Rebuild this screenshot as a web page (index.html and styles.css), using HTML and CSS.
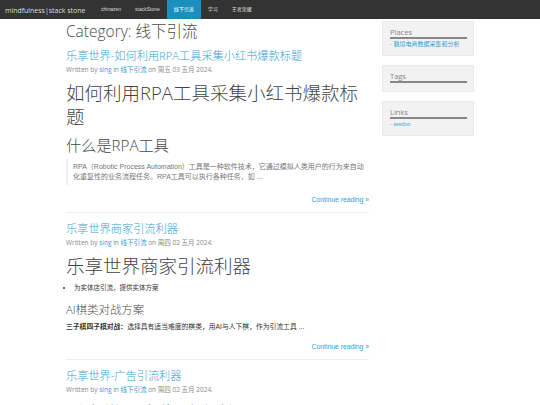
FILE: index.html
```html
<!DOCTYPE html>
<html lang="zh">
<head>
    <meta charset="UTF-8">
    <meta name="viewport" content="width=device-width, initial-scale=1.0">
    <title>线下引流 - mindfulness|stack stone</title>
    <link rel="stylesheet" href="styles.css">
</head>
<body>
    <div class="navbar">
        <a class="brand" href="#"><span>mindfulness|stack stone</span></a>
        <ul class="nav">
            <li><a href="#">chinazen</a></li>
            <li><a href="#">stackStone</a></li>
            <li class="active"><a href="#">线下引流</a></li>
            <li><a href="#">学习</a></li>
            <li><a href="#">王者荣耀</a></li>
        </ul>
    </div>
    <div class="container">
        <div class="content">
            <h1 class="page-title">Category: 线下引流</h1>

            <div class="article">
                <h2 class="entry-title"><a href="#">乐享世界-如何利用RPA工具采集小红书爆款标题</a></h2>
                <div class="meta">Written by <a href="#">sing</a> in <a href="#">线下引流</a> on 周五 03 五月 2024.</div>
                <h1 class="big">如何利用RPA工具采集小红书爆款标题</h1>
                <h2 class="sub">什么是RPA工具</h2>
                <blockquote>RPA（Robotic Process Automation）工具是一种软件技术，它通过模拟人类用户的行为来自动化重复性的业务流程任务。RPA工具可以执行各种任务，如 ...</blockquote>
                <div class="more"><a href="#">Continue reading »</a></div>
            </div>

            <div class="article">
                <h2 class="entry-title"><a href="#">乐享世界商家引流利器</a></h2>
                <div class="meta">Written by <a href="#">sing</a> in <a href="#">线下引流</a> on 周四 02 五月 2024.</div>
                <h1 class="big">乐享世界商家引流利器</h1>
                <ul class="points">
                    <li>为实体店引流，提供实体方案</li>
                </ul>
                <h3 class="small">AI棋类对战方案</h3>
                <p class="summary"><strong>三子棋四子棋对战：</strong>选择具有适当难度的棋类，用AI与人下棋，作为引流工具 ...</p>
                <div class="more"><a href="#">Continue reading »</a></div>
            </div>

            <div class="article">
                <h2 class="entry-title"><a href="#">乐享世界-广告引流利器</a></h2>
                <div class="meta">Written by <a href="#">sing</a> in <a href="#">线下引流</a> on 周四 02 五月 2024.</div>
                <h1 class="big">乐享世界广告引流利器</h1>
            </div>
        </div>

        <div class="sidebar">
            <div class="well">
                <div class="well-title">Places</div>
                <a href="#">- 跳境电商数据采集和分析</a>
            </div>
            <div class="well">
                <div class="well-title">Tags</div>
            </div>
            <div class="well">
                <div class="well-title">Links</div>
                <a href="#">- weibo</a>
            </div>
        </div>
    </div>
</body>
</html>
```

FILE: styles.css
```css
* {
    box-sizing: border-box;
}
body {
    margin: 0;
    font-family: "Open Sans", "Noto Sans CJK SC", sans-serif;
    color: #333;
    background: #fff;
    overflow: hidden;
    height: 405px;
}
a {
    color: #2a9fd6;
    text-decoration: none;
}
.navbar {
    height: 19px;
    background-color: #333;
    display: flex;
    align-items: stretch;
}
.brand {
    color: #ddd;
    font-size: 8px;
    line-height: 19px;
    padding: 0 0 0 5px;
    width: 94px;
    white-space: nowrap;
    overflow: hidden;
}
.brand span {
    display: inline-block;
    transform: scaleX(0.87);
    transform-origin: left center;
}
.nav {
    list-style: none;
    margin: 0;
    padding: 0;
    display: flex;
}
.nav li a {
    display: block;
    color: #ddd;
    font-size: 5px;
    line-height: 19px;
    padding: 0 7px;
    font-family: "Liberation Sans", "Noto Sans CJK SC", sans-serif;
}
.nav li.active a {
    background-color: #1b8fbf;
    color: #fff;
}
.container {
    display: flex;
    padding-left: 66px;
    gap: 13px;
}
.content {
    width: 303px;
}
.page-title {
    font-size: 15.5px;
    font-weight: 300;
    color: #4a4a4a;
    margin: 1px 0 0;
    line-height: 22px;
}
.article {
    border-bottom: 1px solid #eee;
    padding-bottom: 7px;
    margin-bottom: 7px;
}
.entry-title {
    font-size: 11.2px;
    font-weight: 300;
    margin: 5px 0 0;
    line-height: 18px;
}
.entry-title a {
    color: #3ba3cf;
}
.meta {
    font-size: 6.5px;
    color: #888;
    line-height: 10px;
    margin-top: 0;
}
.big {
    font-size: 18.5px;
    font-weight: 300;
    line-height: 24px;
    margin: 6px 0 0;
    color: #444;
}
.sub {
    font-size: 15.2px;
    font-weight: 300;
    line-height: 22px;
    margin: 5px 0 0;
    color: #444;
}
blockquote {
    margin: 3px 0 0;
    padding: 3px 0 3px 5px;
    border-left: 2px solid #eee;
    font-family: "Liberation Sans", "Noto Sans CJK SC", sans-serif;
    font-size: 7px;
    line-height: 10px;
    color: #777;
}
.more {
    text-align: right;
    margin-top: 10px;
    font-family: "Liberation Sans", sans-serif;
    font-size: 6.8px;
    line-height: 10px;
}
.more a {
    color: #2a9fd6;
}
.points {
    margin: 5px 0 0;
    padding-left: 8px;
    font-family: "Liberation Sans", "Noto Sans CJK SC", sans-serif;
    font-size: 6.5px;
    line-height: 10px;
    color: #333;
}
.small {
    font-size: 11.4px;
    font-weight: 300;
    line-height: 16px;
    margin: 9px 0 0;
    color: #4a4a4a;
}
.summary {
    margin: 4px 0 0;
    font-family: "Liberation Sans", "Noto Sans CJK SC", sans-serif;
    font-size: 6.8px;
    line-height: 10px;
    color: #333;
}
.sidebar {
    width: 92px;
    padding-top: 2px;
}
.well {
    background-color: #f2f2f2;
    border: 1px solid #eaeaea;
    padding: 5px 7px 7px;
    margin-bottom: 9px;
}
.well-title {
    font-size: 7.5px;
    color: #888;
    line-height: 10px;
    border-bottom: 2px solid #888;
    width: 77px;
    margin-bottom: 1px;
}
.well a {
    display: block;
    font-size: 6px;
    line-height: 8px;
    color: #2a9fd6;
}
```
